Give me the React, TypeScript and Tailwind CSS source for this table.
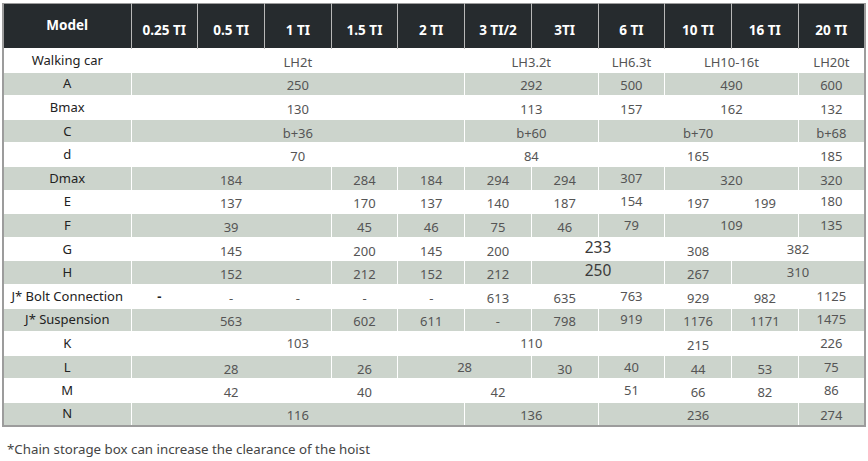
type Cell = [string, number?, string?];

type Row = {
  label: string;
  gray: boolean;
  cells: Cell[];
};

const headers = ['0.25 TI', '0.5 TI', '1 TI', '1.5 TI', '2 TI', '3 TI/2', '3TI', '6 TI', '10 TI', '16 TI', '20 TI'];

const rows: Row[] = [
  { label: 'Walking car', gray: false, cells: [['LH2t', 5], ['LH3.2t', 2], ['LH6.3t'], ['LH10-16t', 2], ['LH20t']] },
  { label: 'A', gray: true, cells: [['250', 5], ['292', 2], ['500'], ['490', 2], ['600']] },
  { label: 'Bmax', gray: false, cells: [['130', 5], ['113', 2], ['157'], ['162', 2], ['132']] },
  { label: 'C', gray: true, cells: [['b+36', 5], ['b+60', 2], ['b+70', 3], ['b+68']] },
  { label: 'd', gray: false, cells: [['70', 5], ['84', 2], ['165', 3], ['185']] },
  {
    label: 'Dmax',
    gray: true,
    cells: [['184', 3], ['284'], ['184'], ['294'], ['294'], ['307', 1, 'hi'], ['320', 2], ['320']],
  },
  {
    label: 'E',
    gray: false,
    cells: [['137', 3], ['170'], ['137'], ['140'], ['187'], ['154', 1, 'hi'], ['197'], ['199'], ['180', 1, 'hi']],
  },
  {
    label: 'F',
    gray: true,
    cells: [['39', 3], ['45'], ['46'], ['75'], ['46'], ['79', 1, 'hi'], ['109', 2, 'hi'], ['135', 1, 'hi']],
  },
  {
    label: 'G',
    gray: false,
    cells: [['145', 3], ['200'], ['145'], ['200'], ['233', 2, 'big'], ['308'], ['382', 2, 'hi']],
  },
  {
    label: 'H',
    gray: true,
    cells: [['152', 3], ['212'], ['152'], ['212'], ['250', 2, 'big'], ['267'], ['310', 2, 'hi']],
  },
  {
    label: 'J* Bolt Connection',
    gray: false,
    cells: [
      ['-', 1, 'dash'],
      ['-'],
      ['-'],
      ['-'],
      ['-'],
      ['613'],
      ['635'],
      ['763', 1, 'hi'],
      ['929'],
      ['982'],
      ['1125', 1, 'hi'],
    ],
  },
  {
    label: 'J* Suspension',
    gray: true,
    cells: [['563', 3], ['602'], ['611'], ['-'], ['798'], ['919', 1, 'hi'], ['1176'], ['1171'], ['1475', 1, 'hi']],
  },
  { label: 'K', gray: false, cells: [['103', 5, 'hi'], ['110', 2, 'hi'], ['215', 3], ['226', 1, 'hi']] },
  {
    label: 'L',
    gray: true,
    cells: [['28', 3], ['26'], ['28', 2, 'hi'], ['30'], ['40', 1, 'hi'], ['44'], ['53'], ['75', 1, 'hi']],
  },
  {
    label: 'M',
    gray: false,
    cells: [['42', 3], ['40'], ['42', 3], ['51', 1, 'hi'], ['66'], ['82'], ['86', 1, 'hi']],
  },
  { label: 'N', gray: true, cells: [['116', 5], ['136', 2], ['236', 3], ['274']] },
];

const cellStyle = (variant?: string) => {
  if (variant === 'big') return 'pb-[3px] text-[15.5px] text-[#3a3a3a]';
  if (variant === 'hi') return 'pt-0 text-[#555]';
  if (variant === 'dash') return 'pt-0 pr-[10px] font-bold text-[#222]';
  return 'pt-[4px] text-[#555]';
};

const App = () => {
  return (
    <div className="w-[868px] h-[461px] bg-white pl-[2px] pt-[3px] font-['Noto_Sans',sans-serif]">
      <table className="w-[864px] table-fixed border-collapse border-x-2 border-b-2 border-t border-[#9c9c9c]">
        <colgroup>
          <col className="w-[128px]" />
          {headers.map((h) => (
            <col key={h} />
          ))}
        </colgroup>
        <thead>
          {/* header row is dark, the model cell sits higher than the load columns */}
          <tr className="h-[45px] bg-[#262b2e]">
            <th className="border-x border-[#b8b8b8] pb-[1px] text-center text-[13.5px] font-bold text-white">
              Model
            </th>
            {headers.map((h) => (
              <th
                key={h}
                className="border-x border-[#b8b8b8] pt-[9px] text-center text-[13.5px] font-bold text-white"
              >
                {h}
              </th>
            ))}
          </tr>
        </thead>
        <tbody>
          {rows.map((row) => (
            <tr key={row.label} className={row.gray ? 'h-[23.6px] bg-[#ccd4cc]' : 'h-[23.6px] bg-white'}>
              <td className="border border-white text-center text-[13px] leading-none whitespace-nowrap text-[#222]">
                {row.label}
              </td>
              {row.cells.map(([text, span, variant], i) => (
                <td
                  key={i}
                  colSpan={span ?? 1}
                  className={`border border-white text-center text-[13px] leading-none ${cellStyle(variant)}`}
                >
                  {text}
                </td>
              ))}
            </tr>
          ))}
        </tbody>
      </table>
      <p className="mt-[13px] pl-[5px] text-[13.3px] text-[#444]">
        *Chain storage box can increase the clearance of the hoist
      </p>
    </div>
  );
};

export default App;
